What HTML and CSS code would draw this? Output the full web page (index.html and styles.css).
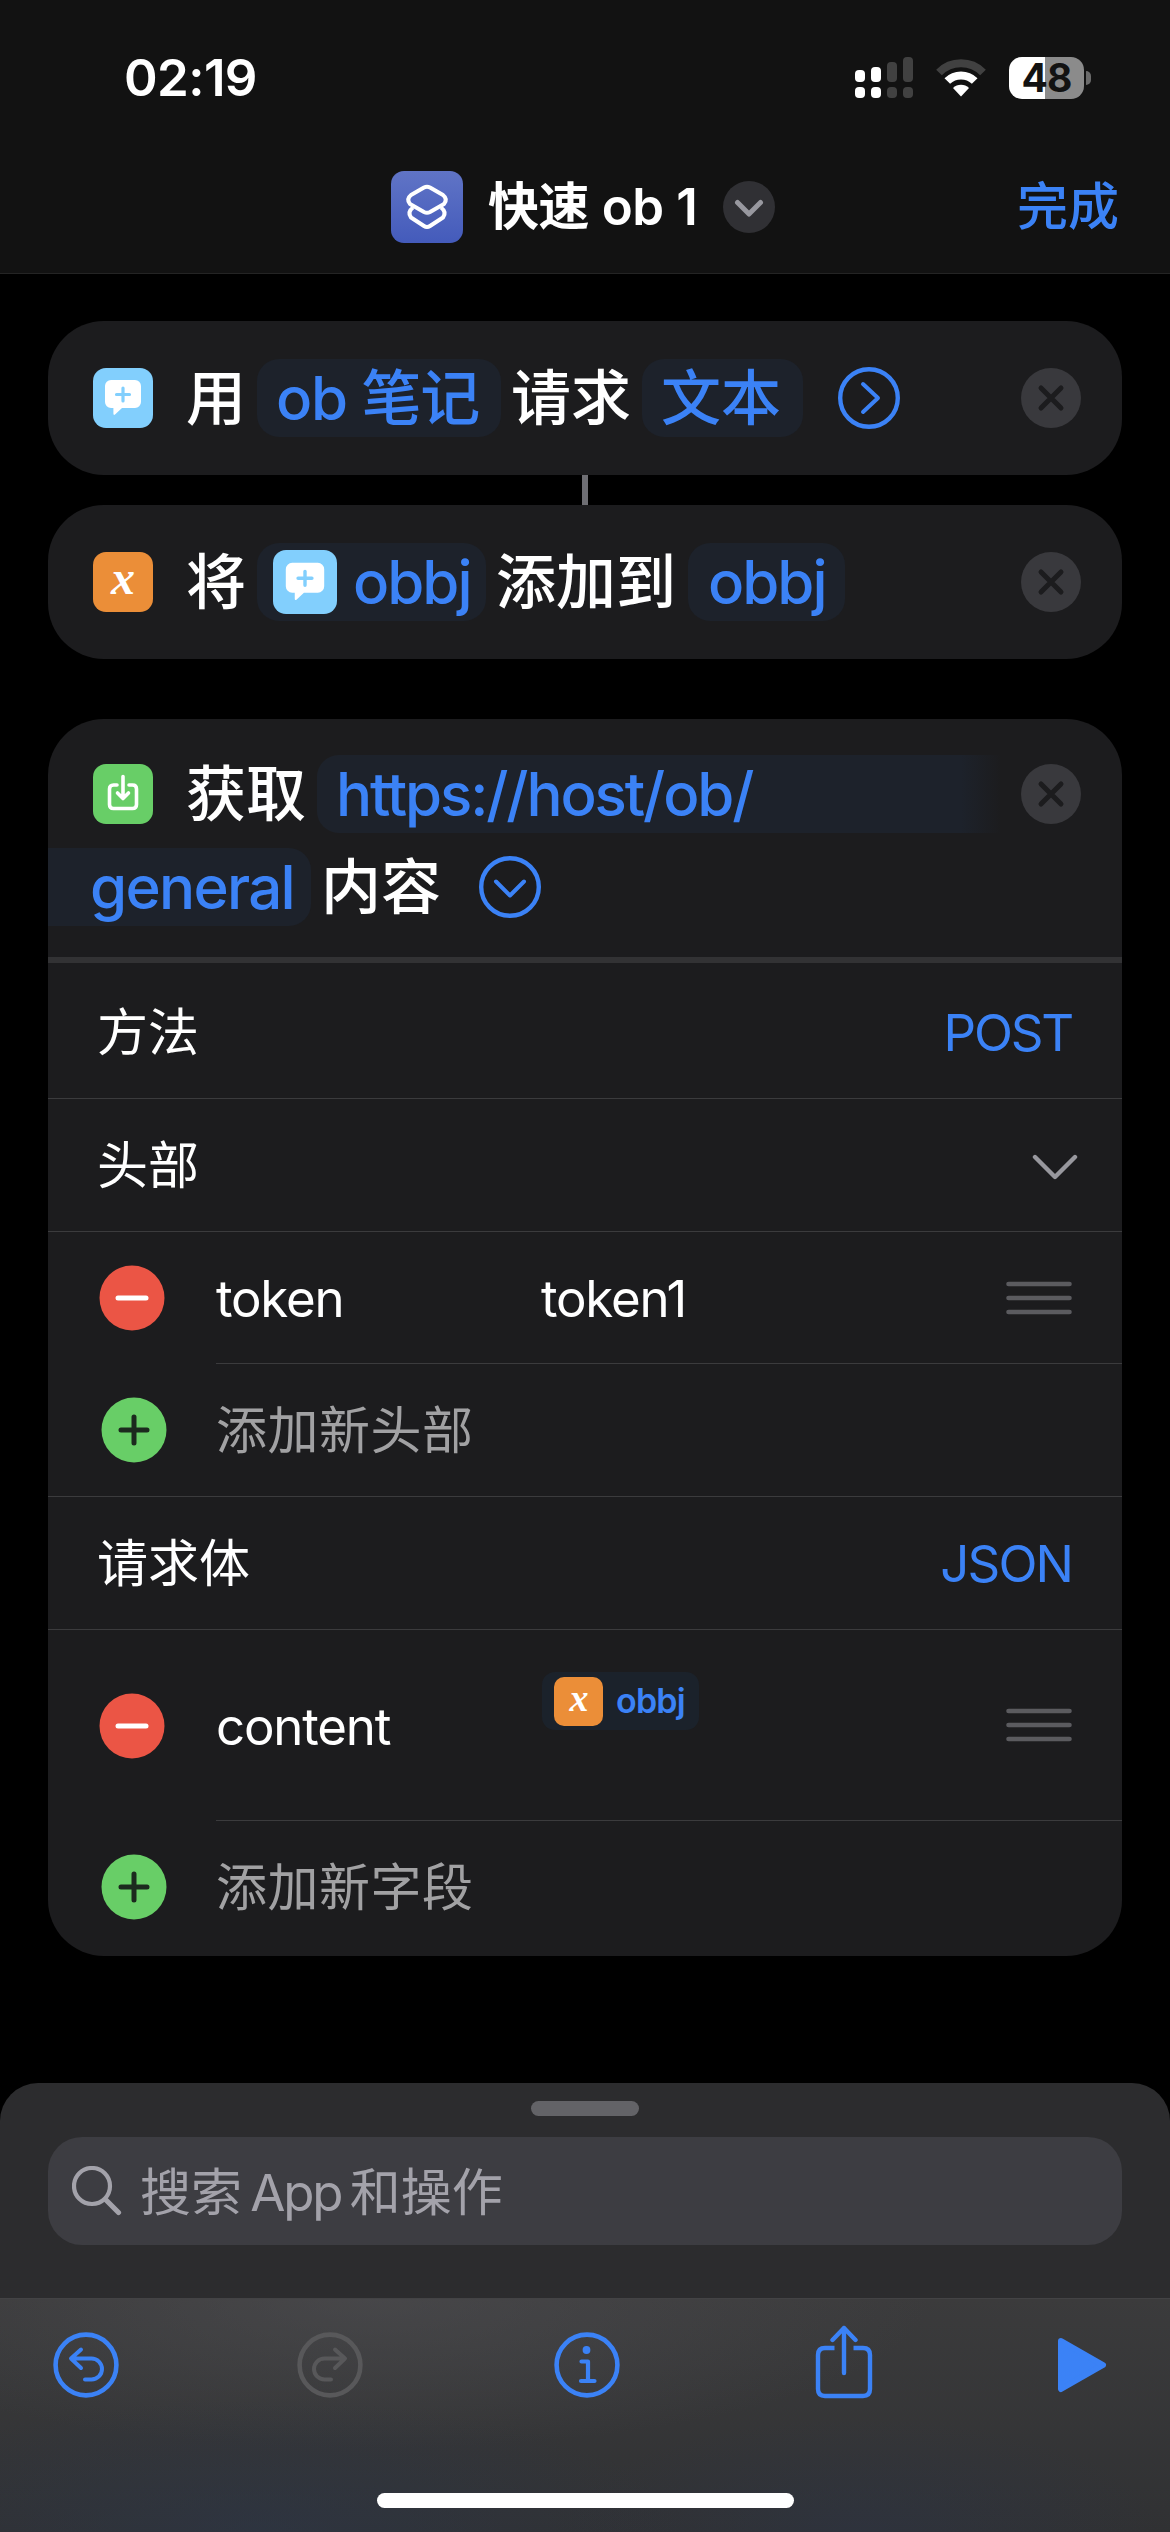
FILE: index.html
```html
<!DOCTYPE html>
<html lang="zh-CN">
<head>
<meta charset="utf-8">
<title>快速 ob 1</title>
<link rel="stylesheet" href="styles.css">
</head>
<body>
<svg class="defs" width="0" height="0">
  <defs>
    <symbol id="bubble" viewBox="0 0 60 60">
      <path d="M18 12h24a6 6 0 0 1 6 6v16a6 6 0 0 1-6 6H29l-7 6.600q-1.600 1-1.600-1V40H18a6 6 0 0 1-6-6V18a6 6 0 0 1 6-6z" fill="#fff"/>
      <path d="M30 20v13M23.500 26.500h13" stroke="#82cffd" stroke-width="3.200" stroke-linecap="round"/>
    </symbol>
    <symbol id="close" viewBox="0 0 60 60">
      <circle cx="30" cy="30" r="30" fill="#39393d"/>
      <path d="M20 20l20 20M40 20L20 40" stroke="#1c1c1e" stroke-width="5" stroke-linecap="round"/>
    </symbol>
    <symbol id="minus" viewBox="0 0 66 66">
      <circle cx="33" cy="33" r="32.500" fill="#eb5545"/>
      <path d="M19 33h28" stroke="#fff" stroke-width="5" stroke-linecap="round"/>
    </symbol>
    <symbol id="plus" viewBox="0 0 66 66">
      <circle cx="33" cy="33" r="32.500" fill="#68ce67"/>
      <path d="M20 33h26M33 20v26" stroke="#1c2a1e" stroke-width="5" stroke-linecap="round"/>
    </symbol>
    <symbol id="handle" viewBox="0 0 66 34">
      <path d="M2.500 3h61M2.500 17h61M2.500 31h61" stroke="#5b5b5f" stroke-width="4.600" stroke-linecap="round"/>
    </symbol>
  </defs>
</svg>

<header class="header">
  <div class="status">
    <span class="time">02:19</span>
    <div class="status-icons">
      <svg width="58" height="41" viewBox="0 0 58 41">
        <g fill="#fff"><rect y="13" width="10" height="12" rx="4"/><rect x="16" y="10" width="10" height="15" rx="4"/><rect y="30" width="10" height="11" rx="4"/><rect x="16" y="30" width="10" height="11" rx="4"/></g>
        <g fill="#414141"><rect x="32" y="5" width="10" height="20" rx="4"/><rect x="48" width="10" height="25" rx="4"/><rect x="32" y="30" width="10" height="11" rx="4"/><rect x="48" y="30" width="10" height="11" rx="4"/></g>
      </svg>
      <svg class="wifi" width="52" height="38" viewBox="0 0 52 38">
        <path d="M4 13.500a31 31 0 0 1 44 0" fill="none" stroke="#414141" stroke-width="8"/>
        <path d="M12.300 22a19.500 19.500 0 0 1 27.400 0" fill="none" stroke="#fff" stroke-width="8"/>
        <path d="M26 37.500l-8-8.500a11.500 11.500 0 0 1 16 0z" fill="#fff"/>
      </svg>
      <div class="battery"><span>48</span></div>
      <i class="battery-cap"></i>
    </div>
  </div>
  <div class="navbar">
    <div class="nav-title">
      <div class="app-icon">
        <svg width="72" height="72" viewBox="0 0 72 72" fill="none" stroke="#fff" stroke-width="4" stroke-linejoin="round">
          <path d="M33 16.500q3-1.600 6 0l13 7.500q5 4 1 9l-14 8q-3 1.600-6 0l-14-8q-4-5 1-9z"/>
          <path d="M22 36.500q-6 4.500-2 10l13 8.500q3 2 6 0l13-8.500q4-5.500-2-10"/>
        </svg>
      </div>
      <span class="title-text">快速 ob 1</span>
      <svg width="52" height="52" viewBox="0 0 52 52"><circle cx="26" cy="26" r="26" fill="#303034"/><path d="M14.500 21.500L26 33l11.500-11.500" fill="none" stroke="#98989f" stroke-width="5" stroke-linecap="round" stroke-linejoin="round"/></svg>
    </div>
    <a class="done">完成</a>
  </div>
</header>

<main class="editor">
  <section class="card action">
    <div class="icon blue"><svg width="60" height="60"><use href="#bubble"/></svg></div>
    <div class="sentence">
      <span class="word">用</span>
      <span class="chip w-note"><b class="t-note">ob 笔记</b></span>
      <span class="word">请求</span>
      <span class="chip w-text">文本</span>
      <svg class="disclose" width="62" height="62" viewBox="0 0 62 62" fill="none" stroke="#3b82f6" stroke-linecap="round" stroke-linejoin="round"><circle cx="31" cy="31" r="28.800" stroke-width="4.400"/><path d="M25 17l15 14-15 14" stroke-width="4"/></svg>
    </div>
    <svg class="remove" width="60" height="60"><use href="#close"/></svg>
  </section>
  <div class="connector"></div>
  <section class="card action">
    <div class="icon orange">x</div>
    <div class="sentence">
      <span class="word">将</span>
      <span class="chip w-var"><span class="icon blue inner"><svg width="64" height="64"><use href="#bubble"/></svg></span><b class="t-obbj">obbj</b></span>
      <span class="word">添加到</span>
      <span class="chip w-obbj"><b class="t-obbj">obbj</b></span>
    </div>
    <svg class="remove" width="60" height="60"><use href="#close"/></svg>
  </section>

  <section class="card request">
    <div class="request-head">
      <div class="line first">
        <div class="icon green"><svg width="60" height="60" viewBox="0 0 60 60" fill="none" stroke="#fff" stroke-width="3.600" stroke-linecap="round" stroke-linejoin="round"><path d="M24 21h-3.500q-4 0-4 4v15.500q0 4 4 4h19q4 0 4-4V25q0-4-4-4H36M30 12.500V34M24.500 29l5.500 5.500 5.500-5.500"/></svg></div>
        <div class="sentence">
          <span class="word">获取</span>
          <span class="chip url-start"><b class="t-url">https://host/ob/</b></span>
        </div>
        <svg class="remove" width="60" height="60"><use href="#close"/></svg>
      </div>
      <div class="line second">
        <span class="chip url-end"><b class="t-general">general</b></span>
        <span class="word">内容</span>
        <svg class="disclose" width="62" height="62" viewBox="0 0 62 62" fill="none" stroke="#3b82f6" stroke-linecap="round" stroke-linejoin="round"><circle cx="31" cy="31" r="28.800" stroke-width="4.400"/><path d="M17 25.500l14 14 14-14" stroke-width="4"/></svg>
      </div>
    </div>
    <div class="row first-row"><span>方法</span><span class="value post">POST</span></div>
    <div class="row"><span>头部</span><svg class="chevron" width="46" height="28" viewBox="0 0 46 28"><path d="M3 3l20 20L43 3" fill="none" stroke="#98989e" stroke-width="4.400" stroke-linecap="round" stroke-linejoin="round"/></svg></div>
    <div class="field">
      <svg width="66" height="66"><use href="#minus"/></svg>
      <div class="field-body"><span class="key">token</span><span class="val">token1</span><svg class="handle" width="66" height="34"><use href="#handle"/></svg></div>
    </div>
    <div class="field add">
      <svg width="66" height="66"><use href="#plus"/></svg>
      <div class="field-body">添加新头部</div>
    </div>
    <div class="row body-row"><span>请求体</span><span class="value">JSON</span></div>
    <div class="field tall">
      <svg width="66" height="66"><use href="#minus"/></svg>
      <div class="field-body"><span class="key">content</span><span class="val"><span class="mini"><span class="icon orange">x</span><b>obbj</b></span></span><svg class="handle" width="66" height="34"><use href="#handle"/></svg></div>
    </div>
    <div class="field add last">
      <svg width="66" height="66"><use href="#plus"/></svg>
      <div class="field-body">添加新字段</div>
    </div>
  </section>
</main>

<footer class="sheet">
  <div class="grabber"></div>
  <div class="search">
    <svg width="50" height="50" viewBox="0 0 50 50" fill="none" stroke="#a3a2aa" stroke-linecap="round"><circle cx="20" cy="20" r="18" stroke-width="4.200"/><path d="M33.500 33.500L46.500 46.500" stroke-width="5.200"/></svg>
    <span class="placeholder">搜索 <span class="latin">App</span> 和操作</span>
  </div>
  <nav class="toolbar">
    <svg width="66" height="66" viewBox="0 0 66 66" fill="none" stroke="#3b82f6" stroke-width="4.600" stroke-linecap="round" stroke-linejoin="round"><circle cx="33" cy="33" r="30.400"/><path d="M28 17.500L18 26.500l10 9.500M19 26.500h19.500a10.500 10.500 0 0 1 0 21H32" stroke-width="4"/></svg>
    <svg class="redo" width="66" height="66" viewBox="0 0 66 66" fill="none" stroke="#58585a" stroke-width="4.600" stroke-linecap="round" stroke-linejoin="round"><circle cx="33" cy="33" r="30.400"/><path d="M38 17.500l10 9-10 9.500M47 26.500H27.500a10.500 10.500 0 0 0 0 21H34" stroke-width="4"/></svg>
    <svg class="info" width="66" height="66" viewBox="0 0 66 66" fill="none" stroke="#3b82f6" stroke-width="4.600" stroke-linecap="round" stroke-linejoin="round"><circle cx="33" cy="33" r="30.400"/><circle cx="32.500" cy="18" r="3.900" fill="#3b82f6" stroke="none"/><path d="M27.500 29.500h6.500V49M27 49h13.500" stroke-width="4.200"/></svg>
    <svg class="share" width="58" height="74" viewBox="0 0 58 74" fill="none" stroke="#3b82f6" stroke-width="4.400" stroke-linecap="round" stroke-linejoin="round"><path d="M19.500 23H10q-7 0-7 7v34q0 7 7 7h38q7 0 7-7V30q0-7-7-7h-9.500" stroke-linecap="butt"/><path d="M29 48V3M17.500 15L29 3l11.500 12"/></svg>
    <svg class="play" width="50" height="56" viewBox="0 0 50 56"><path d="M4 4l42 24L4 52z" fill="#3b82f6" stroke="#3b82f6" stroke-width="6" stroke-linejoin="round"/></svg>
  </nav>
  <div class="home"></div>
</footer>
</body>
</html>
```
FILE: styles.css
```css
* { box-sizing: border-box; }
body {
  margin: 0;
  width: 1170px;
  height: 2532px;
  background: #000;
  color: #fff;
  font-family: Inter, "Noto Sans CJK SC", sans-serif;
  display: flex;
  flex-direction: column;
  overflow: hidden;
}
svg { display: block; flex: none; }
.defs { position: absolute; }
b { font-weight: inherit; }

/* Header */
.header { height: 274px; background: #121212; border-bottom: 1px solid #242424; flex: none; }
.status { height: 155px; padding: 0 79px 0 124px; display: flex; justify-content: space-between; align-items: center; }
.time { font-size: 51px; font-weight: 600; letter-spacing: -0.6px; line-height: 60px; }
.status-icons { display: flex; align-items: center; }
.wifi { margin: 0 22px; }
.battery {
  width: 75px; height: 42px; border-radius: 13px;
  background: linear-gradient(90deg, #fff 36px, #8b8b8b 36px);
  color: #121212; font-size: 39px; line-height: 42px; font-weight: 700; text-align: center; letter-spacing: -1px;
}
.battery-cap { width: 5px; height: 14px; margin-left: 2px; border-radius: 0 6px 6px 0; background: #6b6b6b; }
.navbar { height: 104px; padding: 0 51px 0 391px; display: flex; justify-content: space-between; align-items: center; }
.nav-title { display: flex; align-items: center; }
.app-icon { width: 72px; height: 72px; border-radius: 13px; background: linear-gradient(#6074c6, #445bbb); }
.title-text { width: 235px; margin-left: 25px; font-size: 51px; line-height: 60px; font-weight: 600; letter-spacing: -0.4px; white-space: nowrap; }
.done { color: #3b82f6; font-size: 51px; line-height: 60px; font-weight: 500; }

/* Action cards */
.editor { padding: 47px 48px 0; flex: none; }
.card { background: #1c1c1e; border-radius: 56px; overflow: hidden; }
.action { height: 154px; padding: 0 41px 0 45px; display: flex; align-items: center; }
.connector { width: 6px; height: 30px; margin: 0 auto; background: #6e6e73; }
.icon {
  width: 60px; height: 60px; border-radius: 13px; flex: none;
  display: flex; align-items: center; justify-content: center;
}
.blue { background: #82cffd; }
.green { background: #68ce67; }
.orange {
  background: #eb8e38; color: #fff;
  font: italic bold 48px/48px "Liberation Serif", serif;
  padding-bottom: 8px;
}
.sentence {
  flex: 1; margin-left: 33px; display: flex; align-items: center;
  font-size: 60px; line-height: 78px; font-weight: 500; white-space: nowrap;
}
.chip {
  height: 78px; border-radius: 22px; background: #1d222b; color: #3b82f6;
  margin: 0 10px 0 11px; display: flex; align-items: center; flex: none; padding-left: 19px;
}
.w-note { width: 244px; }
.w-text { width: 161px; }
.w-var { width: 229px; padding-left: 16px; }
.w-obbj { width: 157px; margin-left: 12px; padding-left: 20px; }
.inner { width: 64px; height: 64px; margin-right: 16px; }
.t-note { letter-spacing: -1.3px; }
.t-obbj { letter-spacing: -2px; }
.t-url { letter-spacing: -2.1px; }
.t-general { letter-spacing: -1.7px; }
.disclose { margin-left: 25px; }

/* Request card */
.request { height: 1237px; margin-top: 60px; display: flex; flex-direction: column; }
.request-head { height: 244px; padding-top: 36px; border-bottom: 6px solid #323234; flex: none; }
.line { display: flex; align-items: center; height: 78px; }
.first { padding: 0 41px 0 45px; }
.url-start {
  width: 684px; margin-right: 0; border-radius: 22px 0 0 22px;
  background: linear-gradient(90deg, #1d222b 644px, #1c1c1e 684px);
}
.second { margin-top: 15px; font-size: 60px; line-height: 78px; font-weight: 500; }
.url-end { width: 263px; margin-left: 0; padding-left: 42px; border-radius: 0 22px 22px 0; }
.second .disclose { margin-left: 38px; }
.row {
  height: 133px; padding: 2px 50px 0 49px; border-bottom: 1px solid #3b3b3d; flex: none;
  display: flex; justify-content: space-between; align-items: center;
  font-size: 51px; line-height: 60px;
}
.first-row { height: 136px; padding-top: 4px; }
.body-row { padding-top: 1px; }
.value { color: #3b82f6; letter-spacing: -1.9px; }
.post { letter-spacing: -2.2px; }
.chevron { margin: 4px -6px 0 0; }
.field { height: 132px; padding-left: 51px; display: flex; align-items: center; font-size: 51px; line-height: 60px; flex: none; }
.field-body { flex: 1; height: 100%; margin-left: 51px; border-bottom: 1px solid #3b3b3d; display: flex; align-items: center; }
.key { width: 325px; padding-top: 3px; letter-spacing: -1.2px; }
.val { flex: 1; padding-top: 3px; letter-spacing: -1.2px; }
.handle { margin-right: 50px; }
.add { height: 133px; padding-left: 53px; border-bottom: 1px solid #3b3b3d; color: #a1a1a3; }
.add .field-body { border: 0; margin-left: 49px; padding-top: 2px; letter-spacing: 0.5px; }
.last { height: 135px; border: 0; padding-bottom: 4px; }
.tall { height: 191px; }
.tall .val { height: 190px; padding-top: 42px; }
.mini {
  width: 157px; height: 58px; margin-left: 1px; padding-left: 12px; border-radius: 13px;
  background: #1b222b; color: #3b82f6; font-size: 34px; line-height: 50px; font-weight: 600; letter-spacing: -0.8px;
  display: flex; align-items: center;
}
.mini .icon { width: 49px; height: 49px; border-radius: 10px; margin-right: 13px; font-size: 38px; line-height: 38px; padding-bottom: 6px; }

/* Bottom sheet */
.sheet {
  margin-top: auto; height: 449px; flex: none;
  background: #2c2c2e; border-radius: 38px 38px 0 0; padding-top: 18px;
  position: relative;
}
.grabber { width: 108px; height: 15px; margin: 0 auto; border-radius: 8px; background: #636367; }
.search {
  height: 108px; margin: 21px 48px 0; padding-left: 24px; border-radius: 34px;
  background: #3d3d42; color: #a3a2aa; display: flex; align-items: center;
  font-size: 51px; line-height: 60px;
}
.placeholder { margin-left: 18px; padding-top: 3px; white-space: nowrap; word-spacing: -6px; }
.latin { letter-spacing: -2.2px; }
.toolbar {
  height: 234px; margin-top: 53px; padding: 0 63px 101px 53px;
  border-top: 1px solid #434345;
  display: flex; align-items: center;
  background:
    radial-gradient(ellipse 420px 130px at 260px 230px, rgba(44, 54, 72, .6), transparent),
    radial-gradient(ellipse 300px 110px at 860px 230px, rgba(44, 52, 70, .5), transparent),
    radial-gradient(ellipse 560px 150px at 370px 0, rgba(82, 82, 86, .5), transparent),
    linear-gradient(#3b3b3c, #303133);
}
.redo { margin-left: 178px; }
.info { margin-left: 191px; }
.share { margin: -6px 0 0 195px; }
.play { margin-left: auto; }
.home { position: absolute; left: 377px; bottom: 24px; width: 417px; height: 15px; border-radius: 8px; background: #fff; }
```
